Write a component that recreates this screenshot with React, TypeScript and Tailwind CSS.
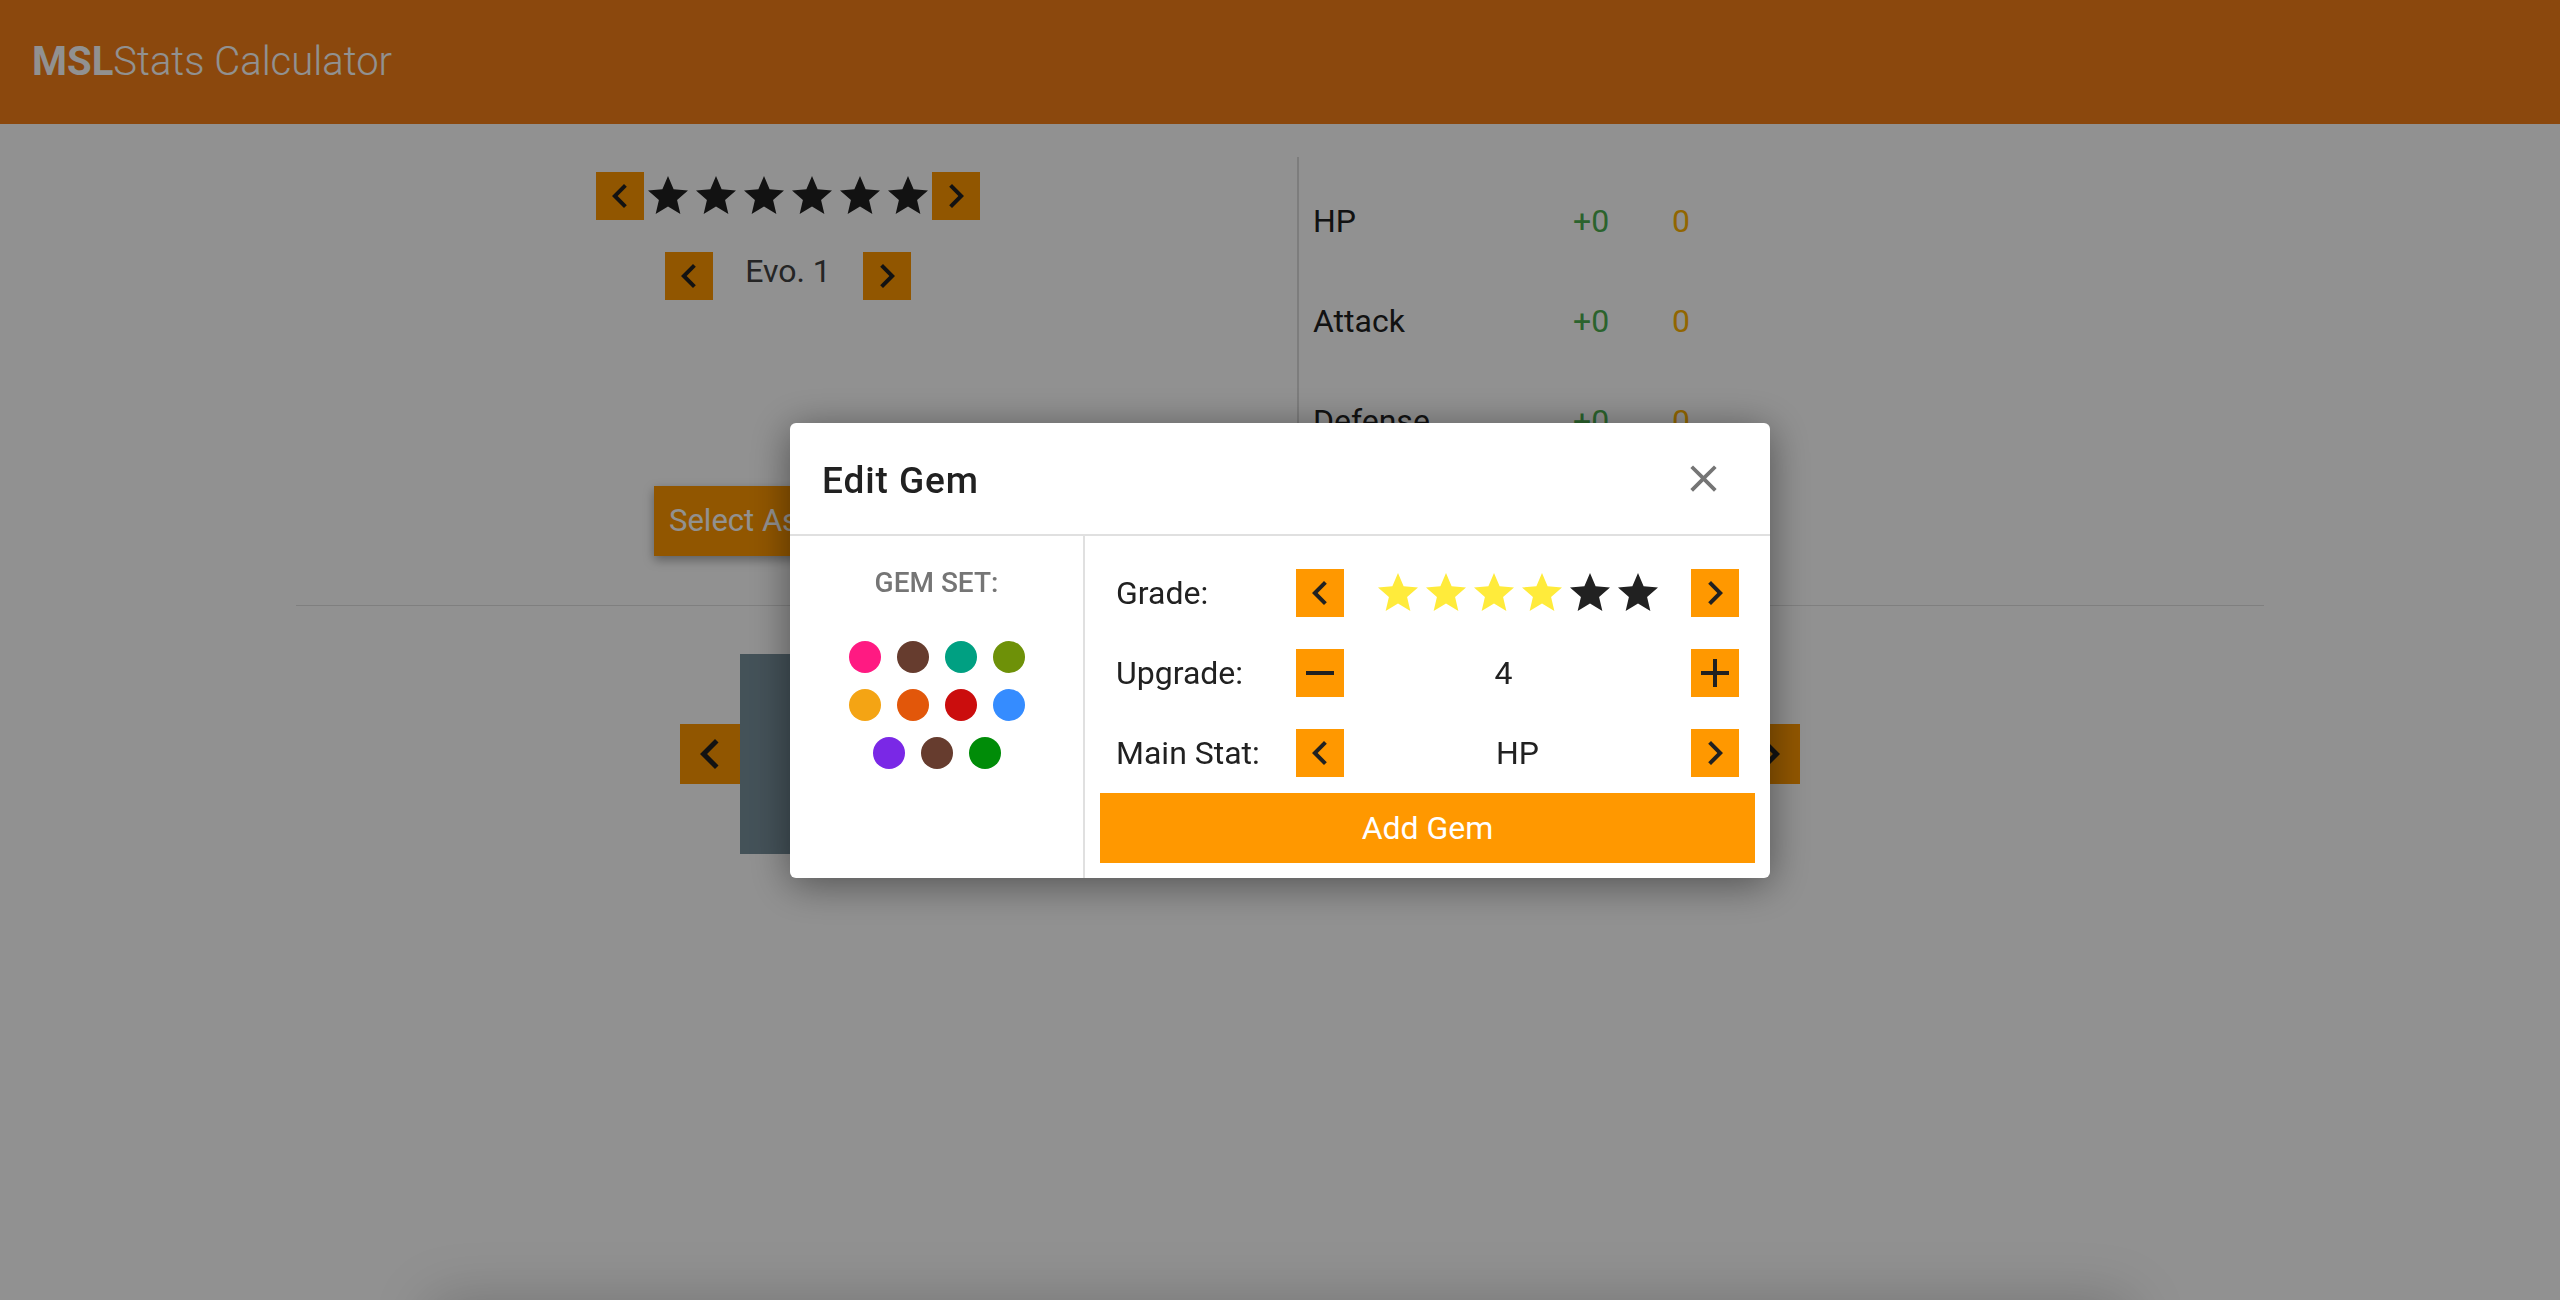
import React from "react";

const chevronLeft = "M15.41 7.41L14 6l-6 6 6 6 1.41-1.41L10.83 12z";
const chevronRight = "M10 6L8.59 7.41 13.17 12l-4.58 4.59L10 18l6-6z";
const plus = "M19 13h-6v6h-2v-6H5v-2h6V5h2v6h6v2z";
const minus = "M19 13H5v-2h14v2z";
const close =
  "M19 6.41L17.59 5 12 10.59 6.41 5 5 6.41 10.59 12 5 17.59 6.41 19 12 13.41 17.59 19 19 17.59 13.41 12z";
const star =
  "M12 17.27L18.18 21l-1.64-7.03L22 9.24l-7.19-.61L12 2 9.19 8.63 2 9.24l5.46 4.73L5.82 21z";

const Icon = ({ d, className }: { d: string; className?: string }) => (
  <svg viewBox="0 0 24 24" fill="currentColor" className={className}>
    <path d={d} />
  </svg>
);

const OrangeBtn = ({ d }: { d: string }) => (
  <button className="w-12 h-12 bg-[#ff9800] text-[#212121] flex items-center justify-center shrink-0">
    <Icon d={d} className="w-12 h-12" />
  </button>
);

const gemColors = [
  "bg-[#ff1a82]",
  "bg-[#663c2e]",
  "bg-[#00a082]",
  "bg-[#6e9108]",
  "bg-[#f4a414]",
  "bg-[#e2570a]",
  "bg-[#cb0d0d]",
  "bg-[#358cff]",
  "bg-[#7a28e6]",
  "bg-[#663c2e]",
  "bg-[#008c08]",
];

const stats = ["HP", "Attack", "Defense", "Recovery"];

const EditGem = () => {
  return (
    <div className="fixed inset-0 z-50 flex items-center justify-center bg-black/[0.43]">
      <div className="w-[980px] bg-white rounded-md shadow-[0_6px_40px_rgba(0,0,0,0.45)] overflow-hidden">
        <div className="h-[113px] flex items-center justify-between pl-8 pr-[44px] border-b-2 border-[#e0e0e0]">
          <h2 className="text-[37px] leading-none font-medium tracking-[0.025em] text-[#212121] pt-[4px]">
            Edit Gem
          </h2>
          <button className="text-[#757575]">
            <Icon d={close} className="w-[45px] h-[45px]" />
          </button>
        </div>

        <div className="flex">
          <div className="w-[295px] shrink-0 border-r-2 border-[#e0e0e0] pt-[33px]">
            <div className="text-center text-[28px] leading-none font-medium text-[#757575] uppercase">
              Gem Set:
            </div>
            <div className="w-[192px] mx-auto mt-[36px] flex flex-wrap justify-center">
              {gemColors.map((c, i) => (
                <span key={i} className={`w-8 h-8 m-2 rounded-full ${c}`}></span>
              ))}
            </div>
          </div>

          <div className="flex-1 px-[15px] pt-[33px] pb-[15px]">
            <div className="px-4 flex flex-col gap-8 text-[32px] leading-none text-[#212121]">
              <div className="flex items-center h-12">
                <div className="w-[180px]">Grade:</div>
                <OrangeBtn d={chevronLeft} />
                <div className="flex-1 flex justify-center">
                  {[0, 1, 2, 3, 4, 5].map((i) => (
                    <Icon
                      key={i}
                      d={star}
                      className={`w-12 h-12 ${i < 4 ? "text-[#ffeb3b]" : "text-[#212121]"}`}
                    />
                  ))}
                </div>
                <OrangeBtn d={chevronRight} />
              </div>
              <div className="flex items-center h-12">
                <div className="w-[180px]">Upgrade:</div>
                <OrangeBtn d={minus} />
                <div className="flex-1 text-center pr-[28px]">4</div>
                <OrangeBtn d={plus} />
              </div>
              <div className="flex items-center h-12">
                <div className="w-[180px]">Main Stat:</div>
                <OrangeBtn d={chevronLeft} />
                <div className="flex-1 text-center">HP</div>
                <OrangeBtn d={chevronRight} />
              </div>
            </div>
            <button className="mt-4 w-full h-[70px] bg-[#ff9800] text-white text-[32px]">
              Add Gem
            </button>
          </div>
        </div>
      </div>
    </div>
  );
};

export default function App() {
  return (
    <div className="min-h-screen bg-white font-['Roboto',sans-serif] text-[#212121]">
      <header className="h-[124px] bg-[#f57f17] flex items-center pl-[32px]">
        <h1 className="text-[40px] text-white">
          <span className="font-bold">MSL</span>
          <span className="font-light">Stats Calculator</span>
        </h1>
      </header>

      <main className="w-[1968px] mx-auto mt-[33px]">
        <div className="flex">
          <div className="w-1/2 flex flex-col items-center pt-[15px] pb-[33px]">
            <div className="flex">
              <OrangeBtn d={chevronLeft} />
              {[0, 1, 2, 3, 4, 5].map((i) => (
                <Icon key={i} d={star} className="w-12 h-12 text-[#212121]" />
              ))}
              <OrangeBtn d={chevronRight} />
            </div>
            <div className="flex items-center mt-8">
              <OrangeBtn d={chevronLeft} />
              <div className="w-[150px] text-center text-[32px] leading-none text-[#424242] pb-[10px]">
                Evo. 1
              </div>
              <OrangeBtn d={chevronRight} />
            </div>
            <button className="mt-[186px] w-[268px] h-[70px] bg-[#ff9800] text-white text-[31px] text-left pl-[15px] whitespace-nowrap shadow-[0_4px_10px_rgba(0,0,0,0.35)]">
              Select Astromon
            </button>
          </div>
          <div className="w-1/2 pl-[17px]">
            <div className="h-full border-l-2 border-[#dcdcdc] pl-[14px] pt-[14px]">
              {stats.map((s) => (
                <div key={s} className="h-[100px] flex items-center text-[32px]">
                  <div className="w-[260px] text-[#212121]">{s}</div>
                  <div className="w-[99px] text-[#4caf50]">+0</div>
                  <div className="text-[#ffb300]">0</div>
                </div>
              ))}
            </div>
          </div>
        </div>

        <hr className="mt-4 border-t border-[#e0e0e0]" />

        <div className="flex items-center justify-center pr-[80px] mt-[48px]">
          <button className="w-[60px] h-[60px] bg-[#ff9800] text-[#212121] flex items-center justify-center">
            <Icon d={chevronLeft} className="w-[60px] h-[60px]" />
          </button>
          <div className="w-[1000px] h-[200px] bg-[#78909c]"></div>
          <button className="w-[60px] h-[60px] bg-[#ff9800] text-[#212121] flex items-center justify-center">
            <Icon d={chevronRight} className="w-[60px] h-[60px]" />
          </button>
        </div>

        <div className="w-[1700px] mx-auto mt-[446px] h-[400px] bg-white rounded-md shadow-[0_0_60px_rgba(0,0,0,0.2)]"></div>
      </main>

      <EditGem />
    </div>
  );
}
